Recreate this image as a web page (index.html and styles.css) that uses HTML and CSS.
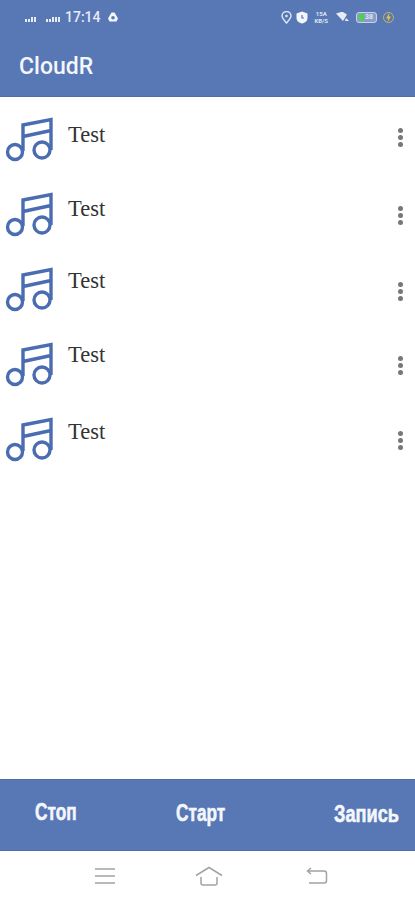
FILE: index.html

```html
<!DOCTYPE html>
<html lang="ru">
<head>
    <meta charset="UTF-8">
    <meta name="viewport" content="width=device-width, initial-scale=1.0">
    <title>CloudR</title>
    <link rel="stylesheet" href="styles.css">
</head>
<body>
    <svg class="sprite" width="0" height="0">
        <symbol id="note" viewBox="0 0 60 50">
            <circle cx="15" cy="37" r="7.500"/>
            <circle cx="42" cy="35" r="8"/>
            <path d="M23 36V10L51 4.500V35M23 21.500L51 15.500"/>
        </symbol>
    </svg>

    <div class="app">
        <header class="header">
            <div class="status-bar">
                <div class="status-left">
                    <span class="signal"><i></i><i></i><i></i><i></i></span>
                    <span class="signal"><i></i><i></i><i></i><i></i><i></i></span>
                    <span class="time">17:14</span>
                    <svg class="status-icon" width="12" height="12" viewBox="0 0 12 12">
                        <path d="M4.500 1.500h3L11 7.500 9.500 10.500h-7L1 7.500z" fill="#f2f5fb"/>
                        <circle cx="6" cy="6.800" r="1.800" fill="#5877b5"/>
                    </svg>
                </div>
                <div class="status-right">
                    <svg class="status-icon pin" width="11" height="13" viewBox="0 0 11 13">
                        <path d="M5.500 12C3 9 1 7 1 5a4.500 4.500 0 0 1 9 0c0 2-2 4-4.500 7z" fill="none" stroke="#dfe6f3" stroke-width="1.400"/>
                        <circle cx="5.500" cy="5" r="1.300" fill="#dfe6f3"/>
                    </svg>
                    <svg class="status-icon" width="12" height="13" viewBox="0 0 12 13">
                        <path d="M6 .500L11.500 2.500V7C11.500 10 9 12 6 12.500 3 12 .500 10 .500 7V2.500z" fill="#f2f5fb"/>
                        <path d="M6 4v3h2" fill="none" stroke="#5877b5" stroke-width="1.200"/>
                    </svg>
                    <span class="speed">15A<br>KB/S</span>
                    <svg class="status-icon" width="14" height="11" viewBox="0 0 14 11">
                        <path d="M0 1.500L5 0h2l4 2.500L7 9z" fill="#e6ebf5"/>
                        <path d="M10 6l3 3h-4z" fill="#e6ebf5"/>
                    </svg>
                    <span class="battery"><span class="battery-level"></span><span class="battery-num">38</span></span>
                    <svg class="status-icon" width="11" height="13" viewBox="0 0 11 13">
                        <circle cx="5.500" cy="6.500" r="5" fill="none" stroke="#c9b75c" stroke-width="1"/>
                        <path d="M6.500 1.500L3 7.500h2.200L4.500 11.500 8 5.500H5.800z" fill="#e3c53c"/>
                    </svg>
                </div>
            </div>
            <div class="title">CloudR</div>
        </header>

        <main class="list">
            <div class="row">
                <svg class="note"><use href="#note"/></svg>
                <span class="name">Test</span>
                <span class="more"><i></i><i></i><i></i></span>
            </div>
            <div class="row">
                <svg class="note"><use href="#note"/></svg>
                <span class="name">Test</span>
                <span class="more"><i></i><i></i><i></i></span>
            </div>
            <div class="row">
                <svg class="note"><use href="#note"/></svg>
                <span class="name">Test</span>
                <span class="more"><i></i><i></i><i></i></span>
            </div>
            <div class="row">
                <svg class="note"><use href="#note"/></svg>
                <span class="name">Test</span>
                <span class="more"><i></i><i></i><i></i></span>
            </div>
            <div class="row">
                <svg class="note"><use href="#note"/></svg>
                <span class="name">Test</span>
                <span class="more"><i></i><i></i><i></i></span>
            </div>
        </main>

        <div class="actions">
            <button class="action action-stop">Стоп</button>
            <button class="action action-start">Старт</button>
            <button class="action action-record">Запись</button>
        </div>

        <nav class="nav">
            <svg width="22" height="18" viewBox="0 0 22 18">
                <path d="M1 2h20M1 9h20M1 16h20"/>
            </svg>
            <svg class="nav-home" width="28" height="20" viewBox="0 0 28 20">
                <path d="M1 9.500L14 1.500 27 9.500M6 11v6a2 2 0 0 0 2 2h12a2 2 0 0 0 2-2v-6"/>
            </svg>
            <svg width="22" height="18" viewBox="0 0 22 18">
                <path d="M2 4h16a2.500 2.500 0 0 1 2.500 2.500v7A2.500 2.500 0 0 1 18 16H3M5 1L1.500 4 5 7"/>
            </svg>
        </nav>
    </div>
</body>
</html>
```

FILE: styles.css

```css
:root {
    --blue: #5877b5;
    --icon: #4a6cb0;
}

* {
    box-sizing: border-box;
    margin: 0;
    padding: 0;
}

html,
body {
    height: 100%;
}

body {
    font-family: 'Roboto', sans-serif;
    background: white;
    overflow: hidden;
}

.sprite {
    display: block;
}

.app {
    display: flex;
    flex-direction: column;
    height: 900px;
}

.header {
    height: 97px;
    background: var(--blue);
    border-bottom: 1px solid #4f6dab;
    color: white;
}

.status-bar {
    display: flex;
    align-items: center;
    justify-content: space-between;
    height: 34px;
    padding: 0 48px 0 25px;
}

.status-left,
.status-right {
    display: flex;
    align-items: center;
}

.status-left {
    gap: 4px;
}

.status-right {
    gap: 6px;
    margin-right: -27px;
}

.pin {
    margin-right: -2px;
}

.signal {
    display: flex;
    align-items: flex-end;
    gap: 1px;
    height: 6px;
    margin-right: 6px;
    margin-top: 3px;
}

.signal i {
    display: block;
    width: 2px;
    height: 3px;
    background: #e6ebf5;
}

.signal i:nth-child(n+3) {
    height: 5px;
}

.time {
    font-size: 14px;
    font-weight: 500;
    color: #e6ebf5;
    margin-left: -5px;
    margin-right: 2px;
}

.speed {
    margin-right: 2px;
    font-size: 6px;
    line-height: 7px;
    font-weight: 700;
    text-align: center;
    color: #dfe6f3;
}

.battery {
    display: flex;
    align-items: center;
    width: 21px;
    height: 11px;
    padding: 1px 2px;
    border: 1px solid #c8d2e6;
    border-radius: 3px;
    background: #8a9ec9;
}

.battery-level {
    width: 5px;
    height: 7px;
    background: #4cd24c;
}

.battery-num {
    font-size: 7px;
    font-weight: 700;
    margin-left: 1px;
    color: #dfe6f3;
}

.title {
    padding: 18px 0 0 19px;
    font-size: 23px;
    font-weight: 500;
    line-height: 30px;
    color: #f3f6fb;
}

.list {
    flex: 1;
    padding-top: 5px;
}

.row {
    display: flex;
    align-items: center;
    height: 75px;
    padding-right: 12px;
}

.note {
    width: 60px;
    height: 50px;
    fill: none;
    stroke: var(--icon);
    stroke-width: 3.400;
    flex-shrink: 0;
}

.name {
    flex: 1;
    margin: -10px 0 0 8px;
    font-family: 'Liberation Serif', serif;
    font-size: 22.500px;
    color: #333;
}

.row:nth-child(2) .name {
    margin-top: -12px;
}

.row:nth-child(3) .name {
    margin-top: -18px;
}

.row:nth-child(4) .name {
    margin-top: -20px;
}

.row:nth-child(5) .name {
    margin-top: -16px;
}

.more {
    display: flex;
    flex-direction: column;
    gap: 2px;
    margin-top: 2px;
}

.row:first-child .more {
    margin-top: -4px;
}

.row:nth-child(3) .more {
    margin-top: 4px;
}

.more i {
    display: block;
    width: 5px;
    height: 5px;
    border-radius: 50%;
    background: #777;
}

.actions {
    display: grid;
    grid-template-columns: 141px 158px 1fr;
    align-items: center;
    height: 72px;
    padding: 0 0 3px 35px;
    background: var(--blue);
    border-top: 1px solid #4f6dab;
    border-bottom: 1px solid #4f6dab;
}

.action {
    justify-self: start;
    border: none;
    background: none;
    color: #f3f6fb;
    font-family: 'Liberation Sans', sans-serif;
    font-size: 23px;
    font-weight: 700;
    -webkit-text-stroke: 0.6px #f3f6fb;
    transform: scaleX(0.75);
    transform-origin: left center;
}

.action-stop {
    margin-top: -3px;
}

.action-record {
    margin-top: 1px;
    transform: scaleX(0.79);
}

.nav {
    display: flex;
    align-items: center;
    justify-content: space-between;
    height: 49px;
    padding: 0 87px 0 94px;
}

.nav-home {
    margin-left: -5px;
}

.nav svg {
    fill: none;
    stroke: #a3a3a3;
    stroke-width: 1.500;
}
```
